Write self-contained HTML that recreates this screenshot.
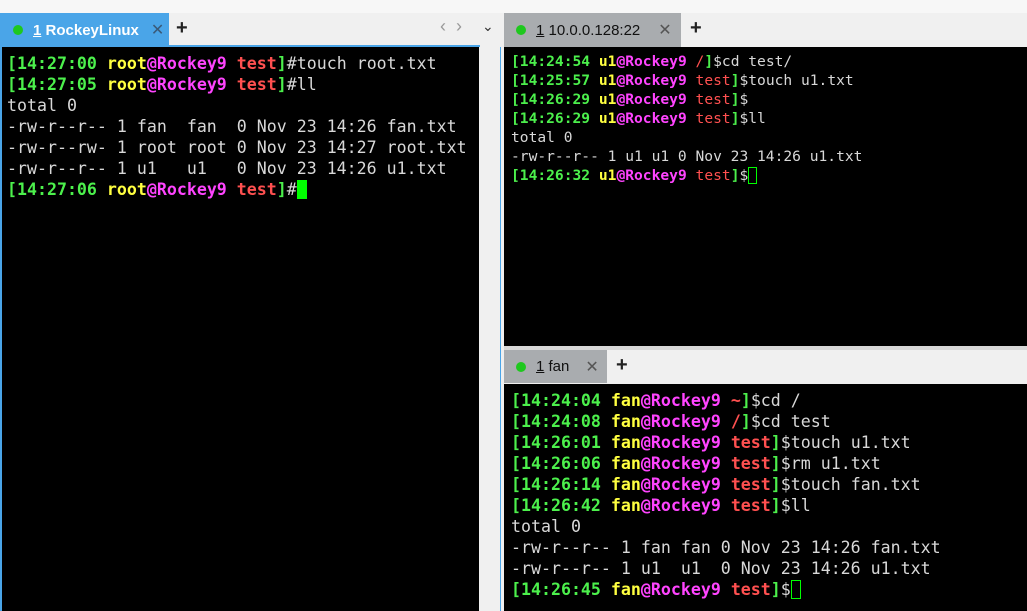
<!DOCTYPE html>
<html><head><meta charset="utf-8"><style>
*{margin:0;padding:0;box-sizing:border-box}
body{width:1027px;height:611px;overflow:hidden;background:#f0f0f0;position:relative;font-family:"Liberation Sans","DejaVu Sans",sans-serif}
.abs{position:absolute}
.term{background:#000;font-family:"DejaVu Sans Mono",monospace;color:#d8d8d8;white-space:pre}
.g{color:#4cf04c;font-weight:bold}.y{color:#ffff40;font-weight:bold}.m{color:#ff44ff;font-weight:bold}.r{color:#ff5050;font-weight:bold}
.n{font-weight:normal}
.tab{font-size:15px;display:flex;align-items:center;white-space:nowrap}
.dot{width:10px;height:10px;border-radius:50%;background:#1ec81e;display:inline-block;margin-right:10px}
.x{font-size:16px;color:#555}
.plus{font-size:20px;font-weight:bold;color:#222}
</style></head><body>
<div class="abs" style="left:0;top:0;width:1027px;height:13px;background:#f7f7f7"></div>
<div class="abs tab" style="left:0;top:13px;width:169px;height:34px;background:#4aa5e8;color:#fff;font-weight:bold;padding-left:13px"><span class="dot"></span><u>1</u>&nbsp;RockeyLinux<span class="x" style="margin-left:12px;color:#3a5a78;font-weight:normal">✕</span></div>
<div class="abs plus" style="left:176px;top:17px">+</div>
<div class="abs" style="left:440px;top:16px;color:#999;font-size:18px">‹&nbsp;&nbsp;›</div>
<div class="abs" style="left:482px;top:18px;color:#333;font-size:14px">⌄</div>
<div class="abs" style="left:0;top:45px;width:480px;height:2px;background:#4aa5e8"></div>
<div class="abs" style="left:0;top:45px;width:2px;height:566px;background:#4aa5e8"></div>
<div class="abs term" style="left:2px;top:47px;width:477px;height:564px;font-size:16.6px;line-height:21px;padding:6px 0 0 5px"><span class="g">[14:27:00 </span><span class="y">root</span><span class="m">@Rockey9 </span><span class="r">test</span><span class="g">]</span>#touch root.txt
<span class="g">[14:27:05 </span><span class="y">root</span><span class="m">@Rockey9 </span><span class="r">test</span><span class="g">]</span>#ll
total 0
-rw-r--r-- 1 fan  fan  0 Nov 23 14:26 fan.txt
-rw-r--rw- 1 root root 0 Nov 23 14:27 root.txt
-rw-r--r-- 1 u1   u1   0 Nov 23 14:26 u1.txt
<span class="g">[14:27:06 </span><span class="y">root</span><span class="m">@Rockey9 </span><span class="r">test</span><span class="g">]</span>#<span style="background:#00ff00"> </span></div>
<div class="abs" style="left:500px;top:47px;width:1px;height:564px;background:#4aa5e8"></div>
<div class="abs tab" style="left:504px;top:13px;width:177px;height:34px;background:#a9acaf;color:#111;padding-left:12px"><span class="dot"></span><u>1</u>&nbsp;10.0.0.128:22<span class="x" style="margin-left:18px">✕</span></div>
<div class="abs plus" style="left:690px;top:17px">+</div>
<div class="abs term" style="left:504px;top:47px;width:523px;height:299px;font-size:14.6px;line-height:19px;padding:5px 0 0 7px"><span class="g">[14:24:54 </span><span class="y">u1</span><span class="m">@Rockey9 </span><span class="r n">/</span><span class="g">]</span>$cd test/
<span class="g">[14:25:57 </span><span class="y">u1</span><span class="m">@Rockey9 </span><span class="r n">test</span><span class="g">]</span>$touch u1.txt
<span class="g">[14:26:29 </span><span class="y">u1</span><span class="m">@Rockey9 </span><span class="r n">test</span><span class="g">]</span>$
<span class="g">[14:26:29 </span><span class="y">u1</span><span class="m">@Rockey9 </span><span class="r n">test</span><span class="g">]</span>$ll
total 0
-rw-r--r-- 1 u1 u1 0 Nov 23 14:26 u1.txt
<span class="g">[14:26:32 </span><span class="y">u1</span><span class="m">@Rockey9 </span><span class="r n">test</span><span class="g">]</span>$<span style="outline:1px solid #00ff00;outline-offset:-1px"> </span></div>
<div class="abs" style="left:504px;top:346px;width:523px;height:4px;background:#d8d8d8"></div>
<div class="abs tab" style="left:504px;top:350px;width:103px;height:33px;background:#a9acaf;color:#111;padding-left:12px"><span class="dot"></span><u>1</u>&nbsp;fan<span class="x" style="margin-left:16px">✕</span></div>
<div class="abs plus" style="left:616px;top:354px">+</div>
<div class="abs term" style="left:504px;top:384px;width:523px;height:227px;font-size:16.6px;line-height:21px;padding:6px 0 0 7px"><span class="g">[14:24:04 </span><span class="y">fan</span><span class="m">@Rockey9 </span><span class="r">~</span><span class="g">]</span>$cd /
<span class="g">[14:24:08 </span><span class="y">fan</span><span class="m">@Rockey9 </span><span class="r">/</span><span class="g">]</span>$cd test
<span class="g">[14:26:01 </span><span class="y">fan</span><span class="m">@Rockey9 </span><span class="r">test</span><span class="g">]</span>$touch u1.txt
<span class="g">[14:26:06 </span><span class="y">fan</span><span class="m">@Rockey9 </span><span class="r">test</span><span class="g">]</span>$rm u1.txt
<span class="g">[14:26:14 </span><span class="y">fan</span><span class="m">@Rockey9 </span><span class="r">test</span><span class="g">]</span>$touch fan.txt
<span class="g">[14:26:42 </span><span class="y">fan</span><span class="m">@Rockey9 </span><span class="r">test</span><span class="g">]</span>$ll
total 0
-rw-r--r-- 1 fan fan 0 Nov 23 14:26 fan.txt
-rw-r--r-- 1 u1  u1  0 Nov 23 14:26 u1.txt
<span class="g">[14:26:45 </span><span class="y">fan</span><span class="m">@Rockey9 </span><span class="r">test</span><span class="g">]</span>$<span style="outline:1px solid #00ff00;outline-offset:-1px"> </span></div>
</body></html>
